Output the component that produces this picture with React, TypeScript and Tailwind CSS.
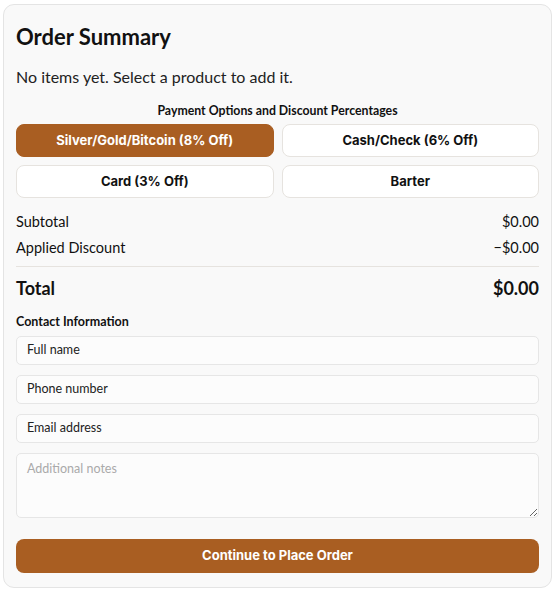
import React from "react";

const body = { fontFamily: 'Lato, "Open Sans", sans-serif' };
const btn = { fontFamily: 'Inter, "Liberation Sans", sans-serif' };

export default function App() {
  const options = [
    { label: "Silver/Gold/Bitcoin (8% Off)", active: true },
    { label: "Cash/Check (6% Off)", active: false },
    { label: "Card (3% Off)", active: false },
    { label: "Barter", active: false },
  ];
  return (
    <div className="bg-white w-[559px] h-[593px] pt-[4px] pl-[3px]" style={body}>
      <div className="w-[549px] h-[584px] rounded-[11px] border border-[#e4e4e4] bg-[#f9f9f9] px-[12px] pt-[18px] text-[#111]">
        <h2 className="text-[22px] font-bold leading-[28px]">Order Summary</h2>
        <p className="mt-[15px] text-[16px] leading-[22px] text-[#222]">No items yet. Select a product to add it.</p>
        <div className="mt-[15px] text-center text-[12.3px] font-bold leading-[16px]">Payment Options and Discount Percentages</div>
        <div className="mt-[5px] grid grid-cols-2 gap-x-[8px] gap-y-[8px]" style={btn}>
          {options.map((o) => (
            <button
              key={o.label}
              className={
                o.active
                  ? "h-[33px] rounded-[8px] border border-[#a95e22] bg-[#a95e22] text-white text-[13px] font-bold"
                  : "h-[33px] rounded-[8px] border border-[#e6e3df] bg-white text-[#111] text-[13px] font-bold"
              }
            >
              {o.label}
            </button>
          ))}
        </div>
        <div className="mt-[14px] flex justify-between text-[14.5px] leading-[20px]">
          <span>Subtotal</span>
          <span>$0.00</span>
        </div>
        <div className="mt-[6px] flex justify-between text-[14.5px] leading-[20px]">
          <span>Applied Discount</span>
          <span>−$0.00</span>
        </div>
        <div className="mt-[8px] border-t border-[#e6e3df]" />
        <div className="mt-[9px] flex justify-between text-[18px] font-bold leading-[24px]">
          <span>Total</span>
          <span>$0.00</span>
        </div>
        <div className="mt-[14px] text-[12.5px] font-bold leading-[16px]">Contact Information</div>
        <div className="mt-[6px] flex flex-col gap-[10px]">
          {["Full name", "Phone number", "Email address"].map((p) => (
            <div key={p} className="h-[29px] rounded-[5px] border border-[#e6e6e6] bg-[#fcfcfc] px-[10px] flex items-center text-[12.5px] text-[#222]">
              {p}
            </div>
          ))}
          <textarea
            placeholder="Additional notes"
            className="h-[65px] rounded-[5px] border border-[#e6e6e6] bg-[#fcfcfc] px-[10px] py-[6px] text-[12.5px] text-[#222] placeholder:text-[#aaa] outline-none resize-y"
            style={body}
          />
        </div>
        <button className="mt-[21px] w-full h-[34px] rounded-[8px] bg-[#a95e22] text-white text-[13px] font-bold" style={btn}>
          Continue to Place Order
        </button>
      </div>
    </div>
  );
}
